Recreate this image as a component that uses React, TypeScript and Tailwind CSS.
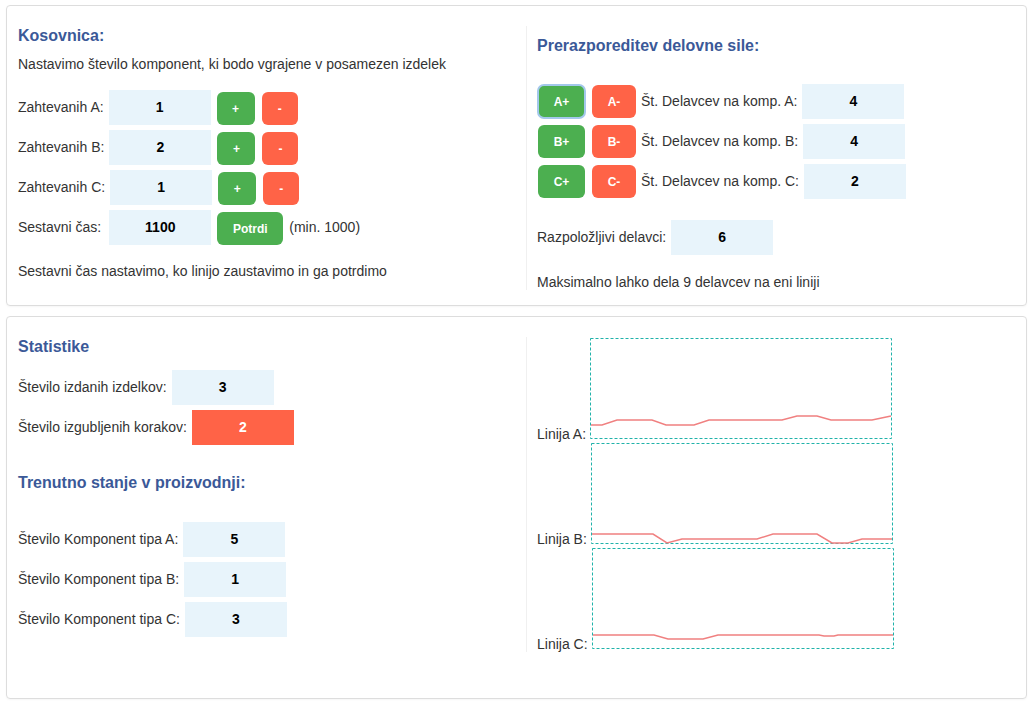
import React from "react";

const font = { fontFamily: '"Liberation Sans", Arial, sans-serif' };

const Value: React.FC<{ v: string | number; red?: boolean; className?: string }> = ({ v, red, className = "" }) => (
  <div
    className={`w-[102px] h-[35px] flex items-center justify-center text-[14px] font-bold ${
      red ? "bg-[#ff6347] text-white" : "bg-[#e8f4fb] text-black"
    } ${className}`}
  >
    {v}
  </div>
);

const Btn: React.FC<{ label: string; red?: boolean; w: string; focus?: boolean }> = ({ label, red, w, focus }) => (
  <button
    className={`${w} h-[33px] rounded-[6px] text-white font-bold text-[12px] flex items-center justify-center ${
      red ? "bg-[#ff6347]" : "bg-[#4caf50]"
    } ${focus ? "outline-2 outline-[#a3c8eb] outline-offset-[-1px]" : ""}`}
  >
    {label}
  </button>
);

// chart box: dashed frame drawn in the svg, line data in inner coords
const Chart: React.FC<{ label: string; points: number[][] }> = ({ label, points }) => (
  <div className="flex items-baseline">
    <span className="text-[14px] leading-[16px]">{label}</span>
    <svg className="ml-[4px] block" width="302" height="101" viewBox="0 0 302 101">
      <rect x="0.5" y="0.5" width="301" height="100" fill="none" stroke="#20b2aa" strokeWidth="1" strokeDasharray="3 2" />
      <polyline
        points={points.map((p) => `${p[0] + 1},${p[1] + 1}`).join(" ")}
        fill="none"
        stroke="#f08080"
        strokeWidth="1.5"
      />
    </svg>
  </div>
);

const lineA = [[0,86],[11,86],[26,81],[61,81],[75,86],[103,86],[118,81],[191,81],[206,77],[226,77],[240,81],[281,81],[300,77]];
const lineB = [[0,90],[61,90],[75,99],[90,95],[165,95],[181,90],[225,90],[240,99],[256,99],[270,95],[300,95]];
const lineC = [[0,86],[61,86],[75,90],[110,90],[125,86],[226,86],[231,87],[241,87],[245,86],[300,86]];

export default function App() {
  return (
    <div style={font} className="min-h-screen bg-white text-[#333] pt-[5px] pl-[6px] pr-[5px] flex flex-col gap-[10px]">
      {/* Kosovnica + Prerazporeditev */}
      <div className="border border-[#dddddd] rounded-[4px] shadow-[0_1px_2px_rgba(0,0,0,0.04)] pt-[20px] pb-[15px] pl-[11px]">
        <div className="grid grid-cols-[508px_1fr]">
          <div>
            <h2 className="text-[16px] leading-[19px] font-bold text-[#3b5998]">Kosovnica:</h2>
            <p className="mt-[11px] text-[14px] leading-[16px]">
              Nastavimo število komponent, ki bodo vgrajene v posamezen izdelek
            </p>
            <div className="mt-[18px] flex flex-col gap-[5px] text-[14px]">
              {[
                ["Zahtevanih A:", 1],
                ["Zahtevanih B:", 2],
                ["Zahtevanih C:", 1],
              ].map(([l, v]) => (
                <div key={l as string} className="flex items-center h-[35px]">
                  <span>{l}</span>
                  <Value v={v} className="ml-[5px]" />
                  <div className="ml-[6px] mt-[2px] flex gap-[7px]">
                    <Btn label="+" w="w-[38px]" />
                    <Btn label="-" red w="w-[36px]" />
                  </div>
                </div>
              ))}
              <div className="flex items-center h-[35px]">
                <span>Sestavni čas:</span>
                <Value v={1100} className="ml-[8px]" />
                <div className="ml-[6px] mt-[2px]">
                  <Btn label="Potrdi" w="w-[66px]" />
                </div>
                <span className="ml-[6px]">(min. 1000)</span>
              </div>
            </div>
            <p className="mt-[18px] text-[14px] leading-[16px]">
              Sestavni čas nastavimo, ko linijo zaustavimo in ga potrdimo
            </p>
          </div>

          <div className="border-l border-[#f0f0f0] pl-[10px] pt-[10px]">
            <h2 className="text-[16px] leading-[19px] font-bold text-[#3b5998]">Prerazporeditev delovne sile:</h2>
            <div className="mt-[29px] flex flex-col gap-[5px] text-[14px]">
              {["A", "B", "C"].map((k, i) => (
                <div key={k} className="flex items-center h-[35px]">
                  <div className="ml-[1px]">
                    <Btn label={`${k}+`} w="w-[47px]" focus={i === 0} />
                  </div>
                  <div className="ml-[7px]">
                    <Btn label={`${k}-`} red w="w-[44px]" />
                  </div>
                  <span className="ml-[5px]">Št. Delavcev na komp. {k}:</span>
                  <Value v={[4, 4, 2][i]} className="ml-[5px]" />
                </div>
              ))}
            </div>
            <div className="mt-[21px] flex items-center h-[35px] text-[14px]">
              <span>Razpoložljivi delavci:</span>
              <Value v={6} className="ml-[5px]" />
            </div>
            <p className="mt-[19px] text-[14px] leading-[16px]">Maksimalno lahko dela 9 delavcev na eni liniji</p>
          </div>
        </div>
      </div>

      {/* Statistike + Linije */}
      <div className="border border-[#dddddd] rounded-[4px] shadow-[0_1px_2px_rgba(0,0,0,0.04)] pt-[20px] pb-[46px] pl-[11px]">
        <div className="grid grid-cols-[508px_1fr]">
          <div className="text-[14px]">
            <h2 className="text-[16px] leading-[19px] font-bold text-[#3b5998]">Statistike</h2>
            <div className="mt-[14px] flex flex-col gap-[5px]">
              <div className="flex items-center h-[35px]">
                <span>Število izdanih izdelkov:</span>
                <Value v={3} className="ml-[5px]" />
              </div>
              <div className="flex items-center h-[35px]">
                <span>Število izgubljenih korakov:</span>
                <Value v={2} red className="ml-[5px]" />
              </div>
            </div>
            <h2 className="mt-[28px] text-[16px] leading-[19px] font-bold text-[#3b5998]">Trenutno stanje v proizvodnji:</h2>
            <div className="mt-[30px] flex flex-col gap-[5px]">
              {[
                ["A", 5],
                ["B", 1],
                ["C", 3],
              ].map(([k, v]) => (
                <div key={k as string} className="flex items-center h-[35px]">
                  <span>Število Komponent tipa {k}:</span>
                  <Value v={v} className="ml-[5px]" />
                </div>
              ))}
            </div>
          </div>

          <div className="border-l border-[#f0f0f0] pl-[10px] pt-[1px] flex flex-col gap-[1px]">
            <Chart label="Linija A:" points={lineA} />
            <Chart label="Linija B:" points={lineB} />
            <Chart label="Linija C:" points={lineC} />
          </div>
        </div>
      </div>
    </div>
  );
}
